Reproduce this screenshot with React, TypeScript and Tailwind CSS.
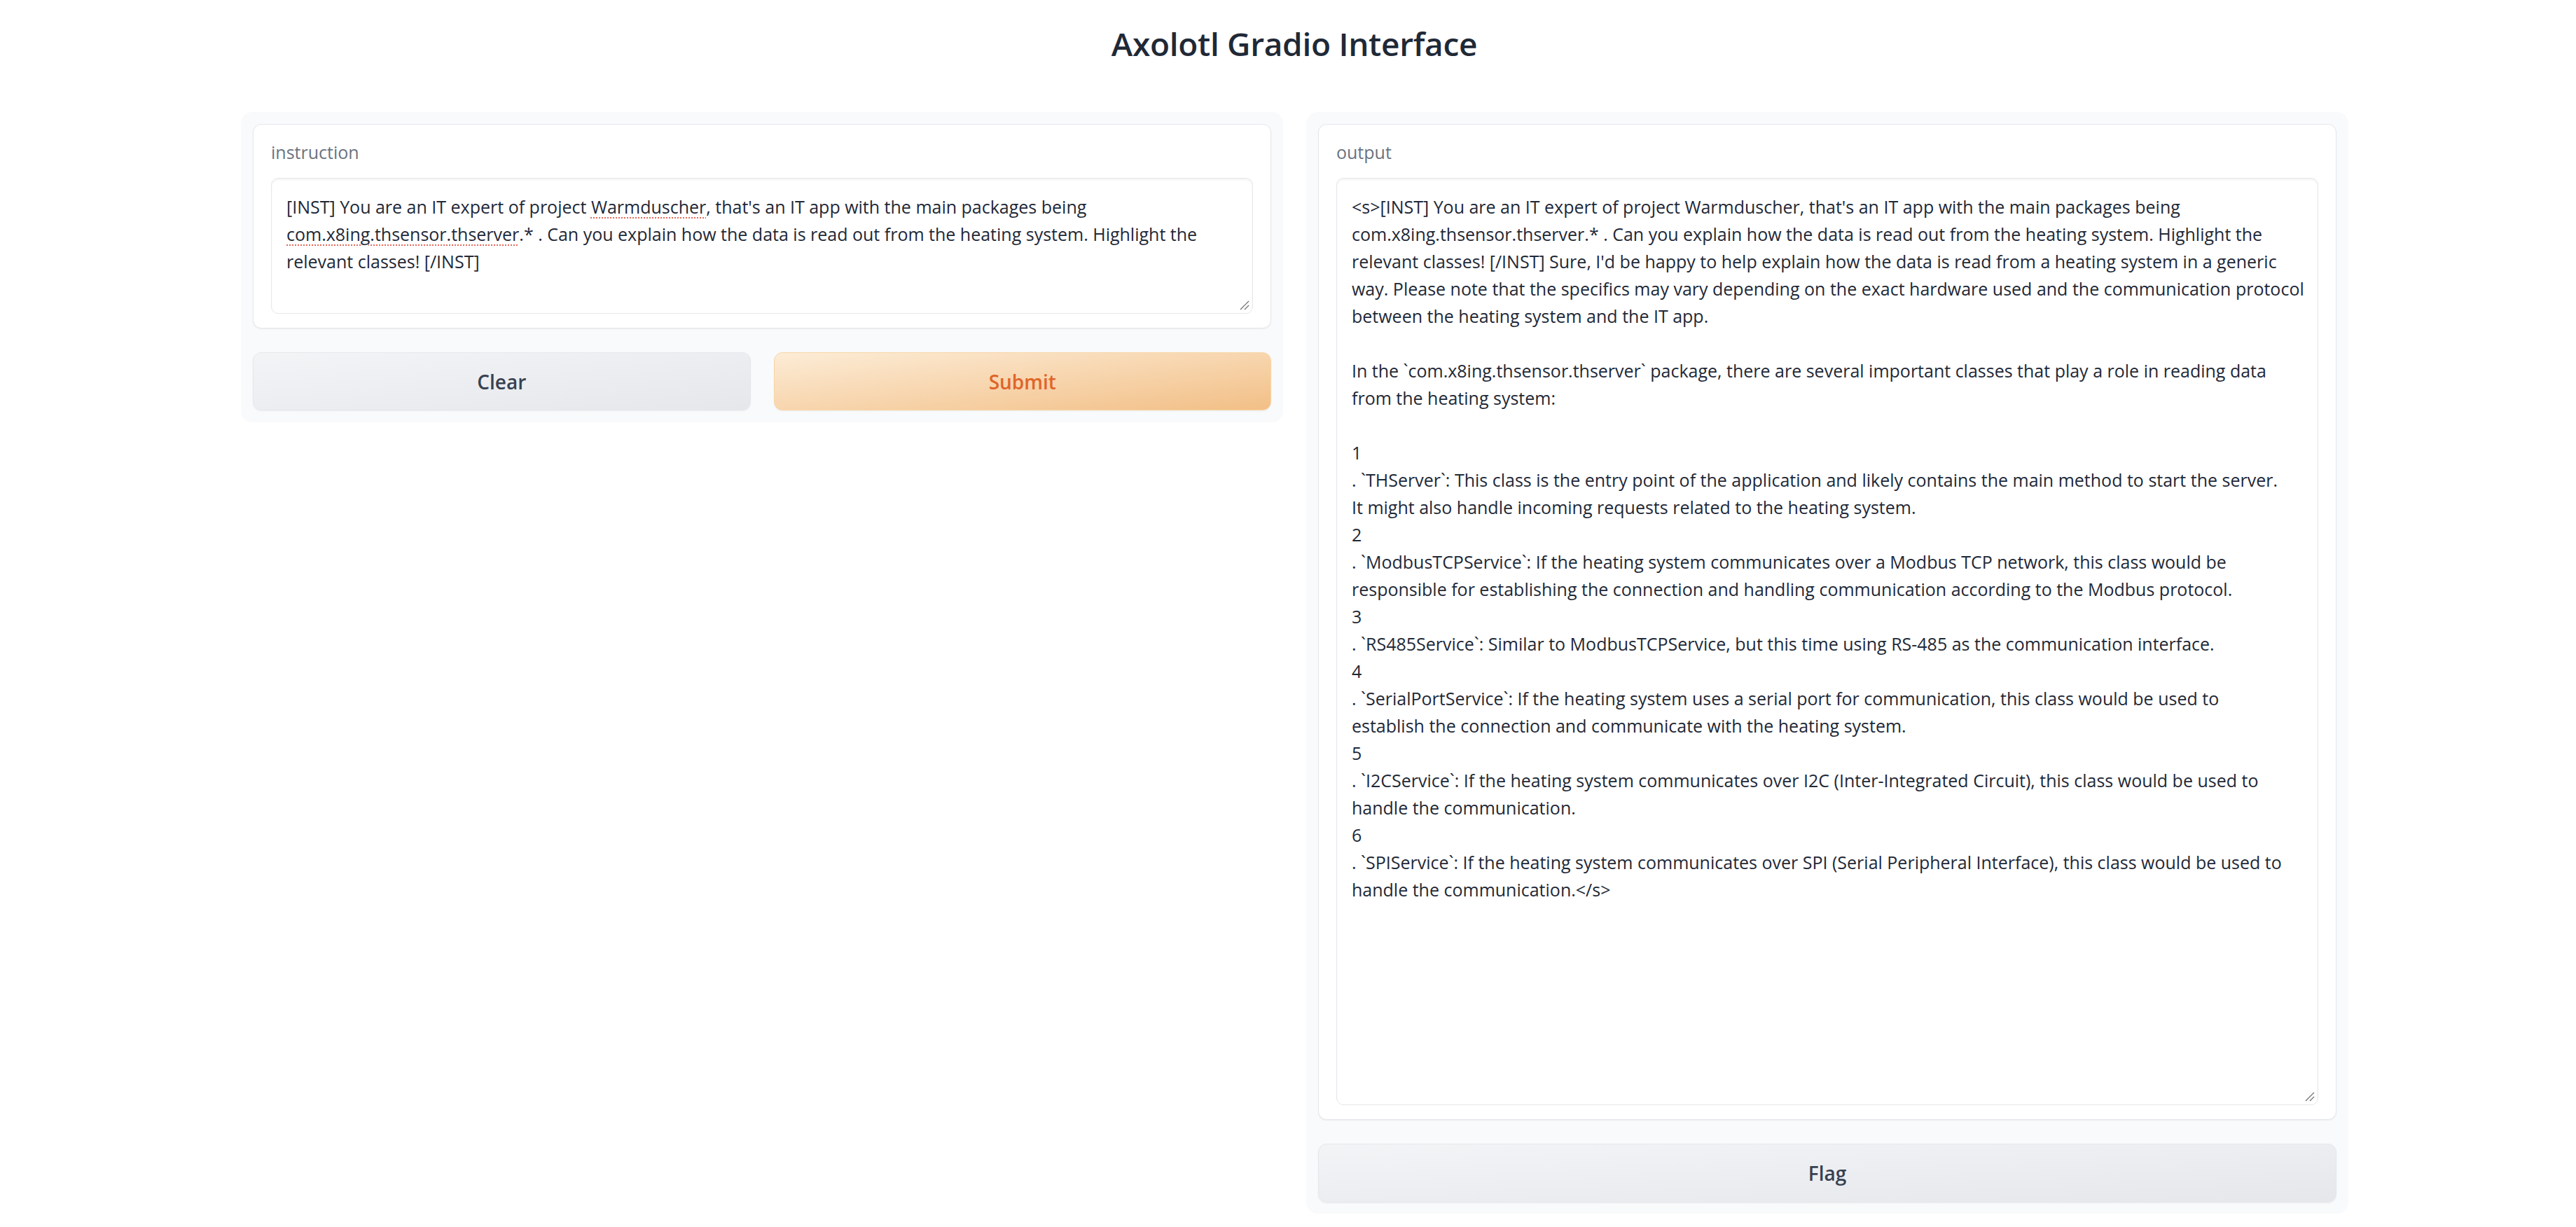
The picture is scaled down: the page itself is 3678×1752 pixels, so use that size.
import React from "react";

const FONT = { fontFamily: "'Open Sans', Lato, 'Noto Sans', 'Liberation Sans', sans-serif" };

const outputLines: string[] = [
  "<s>[INST] You are an IT expert of project Warmduscher, that's an IT app with the main packages being",
  "com.x8ing.thsensor.thserver.* . Can you explain how the data is read out from the heating system. Highlight the",
  "relevant classes! [/INST] Sure, I'd be happy to help explain how the data is read from a heating system in a generic",
  "way. Please note that the specifics may vary depending on the exact hardware used and the communication protocol",
  "between the heating system and the IT app.",
  "",
  "In the `com.x8ing.thsensor.thserver` package, there are several important classes that play a role in reading data",
  "from the heating system:",
  "",
  "1",
  ". `THServer`: This class is the entry point of the application and likely contains the main method to start the server.",
  "It might also handle incoming requests related to the heating system.",
  "2",
  ". `ModbusTCPService`: If the heating system communicates over a Modbus TCP network, this class would be",
  "responsible for establishing the connection and handling communication according to the Modbus protocol.",
  "3",
  ". `RS485Service`: Similar to ModbusTCPService, but this time using RS-485 as the communication interface.",
  "4",
  ". `SerialPortService`: If the heating system uses a serial port for communication, this class would be used to",
  "establish the connection and communicate with the heating system.",
  "5",
  ". `I2CService`: If the heating system communicates over I2C (Inter-Integrated Circuit), this class would be used to",
  "handle the communication.",
  "6",
  ". `SPIService`: If the heating system communicates over SPI (Serial Peripheral Interface), this class would be used to",
  "handle the communication.</s>",
];

function Grip() {
  return (
    <svg className="absolute right-[3px] bottom-[3px]" width="16" height="16" viewBox="0 0 16 16">
      <line x1="2" y1="14" x2="14" y2="2" stroke="#6b6b6b" strokeWidth="1.2" />
      <line x1="8" y1="14" x2="14" y2="8" stroke="#6b6b6b" strokeWidth="1.2" />
    </svg>
  );
}

function Spell({ children }: { children: React.ReactNode }) {
  return (
    <span className="underline decoration-dotted decoration-[#e26a5c] decoration-2 underline-offset-[5px]">
      {children}
    </span>
  );
}

export default function App() {
  return (
    <div className="min-h-[1752px] w-[3678px] bg-white text-[#1f2937]" style={FONT}>
      <div className="flex justify-center pl-[18px] pt-[30px]">
        <h1 className="text-[46px] leading-[64px] font-semibold text-[#1f2937] tracking-[-0.3px]">
          Axolotl Gradio Interface
        </h1>
      </div>

      <div className="ml-[344px] mt-[66px] flex w-[3009px] items-start gap-[33px]">
        {/* Left column */}
        <div className="flex w-[1488px] flex-col gap-[34px] rounded-[16px] bg-[#f9fafb] p-[17px]">
          <div className="rounded-[12px] border border-[#e5e7eb] bg-white px-[25px] pt-[20px] pb-[20px] shadow-[0_1px_2px_rgba(0,0,0,0.06)]">
            <div className="h-[38px] text-[25px] leading-[38px] text-[#6b7280]">instruction</div>
            <div className="relative mt-[18px] h-[194px] rounded-[10px] border border-[#e5e7eb] bg-white pt-[21px] pl-[21px] text-[25px] leading-[39px] text-[#1f2937] shadow-[inset_0_2px_3px_rgba(0,0,0,0.05)]">
              <div className="whitespace-pre">
                [INST] You are an IT expert of project <Spell>Warmduscher</Spell>, that's an IT app with the main packages being
              </div>
              <div className="whitespace-pre">
                <Spell>com.x8ing.thsensor.thserver</Spell>.* . Can you explain how the data is read out from the heating system. Highlight the
              </div>
              <div className="whitespace-pre">relevant classes! [/INST]</div>
              <Grip />
            </div>
          </div>
          <div className="flex gap-[33px]">
            <button className="flex h-[83px] flex-1 items-center justify-center rounded-[12px] border border-[#e5e7eb] bg-linear-to-br from-[#f3f4f6] to-[#e5e7eb] text-[28px] font-semibold text-[#374151] shadow-[0_1px_2px_rgba(0,0,0,0.06)]">
              Clear
            </button>
            <button className="flex h-[83px] flex-1 items-center justify-center rounded-[12px] border border-[#f8d6a6] bg-linear-to-br from-[#fcecd6] to-[#f2bf86] text-[28px] font-semibold text-[#df6529] shadow-[0_1px_2px_rgba(0,0,0,0.06)]">
              Submit
            </button>
          </div>
        </div>

        {/* Right column */}
        <div className="flex w-[1488px] flex-col gap-[34px] rounded-[16px] bg-[#f9fafb] px-[17px] pt-[17px] pb-[16px]">
          <div className="rounded-[12px] border border-[#e5e7eb] bg-white px-[25px] pt-[20px] pb-[20px] shadow-[0_1px_2px_rgba(0,0,0,0.06)]">
            <div className="h-[38px] text-[25px] leading-[38px] text-[#6b7280]">output</div>
            <div className="relative mt-[18px] h-[1324px] rounded-[10px] border border-[#e5e7eb] bg-white pt-[21px] pl-[21px] text-[25px] leading-[39px] text-[#1f2937] shadow-[inset_0_2px_3px_rgba(0,0,0,0.05)]">
              {outputLines.map((l, i) => (
                <div key={i} className="h-[39px] whitespace-pre">
                  {l}
                </div>
              ))}
              <Grip />
            </div>
          </div>
          <button className="flex h-[84px] w-full items-center justify-center rounded-[12px] border border-[#e5e7eb] bg-linear-to-br from-[#f3f4f6] to-[#e5e7eb] text-[28px] font-semibold text-[#374151] shadow-[0_1px_2px_rgba(0,0,0,0.06)]">
            Flag
          </button>
        </div>
      </div>
    </div>
  );
}
